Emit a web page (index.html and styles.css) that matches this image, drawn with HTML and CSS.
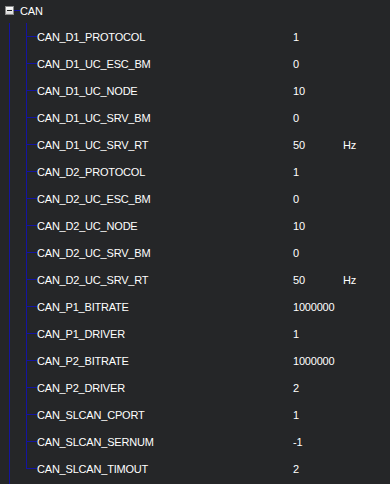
FILE: index.html
```html
<!DOCTYPE html>
<html lang="en">
<head>
    <meta charset="UTF-8">
    <title>Parameters</title>
    <link rel="stylesheet" href="styles.css">
</head>
<body>
    <div class="tree">
        <!-- 그룹 헤더 -->
        <div class="group-row">
            <span class="toggle"><span class="minus"></span></span>
            <span class="group-link"></span>
            <span class="group-name">CAN</span>
        </div>

        <div class="group-body">
            <div class="row"><span class="branch"></span><span class="name">CAN_D1_PROTOCOL</span><span class="value">1</span><span class="unit"></span></div>
            <div class="row"><span class="branch"></span><span class="name">CAN_D1_UC_ESC_BM</span><span class="value">0</span><span class="unit"></span></div>
            <div class="row"><span class="branch"></span><span class="name">CAN_D1_UC_NODE</span><span class="value">10</span><span class="unit"></span></div>
            <div class="row"><span class="branch"></span><span class="name">CAN_D1_UC_SRV_BM</span><span class="value">0</span><span class="unit"></span></div>
            <div class="row"><span class="branch"></span><span class="name">CAN_D1_UC_SRV_RT</span><span class="value">50</span><span class="unit">Hz</span></div>
            <div class="row"><span class="branch"></span><span class="name">CAN_D2_PROTOCOL</span><span class="value">1</span><span class="unit"></span></div>
            <div class="row"><span class="branch"></span><span class="name">CAN_D2_UC_ESC_BM</span><span class="value">0</span><span class="unit"></span></div>
            <div class="row"><span class="branch"></span><span class="name">CAN_D2_UC_NODE</span><span class="value">10</span><span class="unit"></span></div>
            <div class="row"><span class="branch"></span><span class="name">CAN_D2_UC_SRV_BM</span><span class="value">0</span><span class="unit"></span></div>
            <div class="row"><span class="branch"></span><span class="name">CAN_D2_UC_SRV_RT</span><span class="value">50</span><span class="unit">Hz</span></div>
            <div class="row"><span class="branch"></span><span class="name">CAN_P1_BITRATE</span><span class="value">1000000</span><span class="unit"></span></div>
            <div class="row"><span class="branch"></span><span class="name">CAN_P1_DRIVER</span><span class="value">1</span><span class="unit"></span></div>
            <div class="row"><span class="branch"></span><span class="name">CAN_P2_BITRATE</span><span class="value">1000000</span><span class="unit"></span></div>
            <div class="row"><span class="branch"></span><span class="name">CAN_P2_DRIVER</span><span class="value">2</span><span class="unit"></span></div>
            <div class="row"><span class="branch"></span><span class="name">CAN_SLCAN_CPORT</span><span class="value">1</span><span class="unit"></span></div>
            <div class="row"><span class="branch"></span><span class="name">CAN_SLCAN_SERNUM</span><span class="value">-1</span><span class="unit"></span></div>
            <div class="row last"><span class="branch"></span><span class="name">CAN_SLCAN_TIMOUT</span><span class="value">2</span><span class="unit"></span></div>
        </div>
    </div>
</body>
</html>
```

FILE: styles.css
```css
/* 기본 리셋 */
* {
    margin: 0;
    padding: 0;
    box-sizing: border-box;
}

body {
    background-color: #252628;
    color: #ffffff;
    font-family: 'Liberation Sans', Arial, sans-serif;
    font-size: 11px;
    letter-spacing: -0.2px;
    height: 484px;
    overflow: hidden;
}

.tree {
    height: 100%;
}

/* 그룹 헤더 */
.group-row {
    display: flex;
    align-items: center;
    height: 23px;
    padding-left: 5px;
    padding-bottom: 2px;
}

.toggle {
    width: 9px;
    height: 9px;
    border: 1px solid #8a8a8a;
    background: linear-gradient(#ffffff, #d8d8d8);
    display: flex;
    align-items: center;
    justify-content: center;
}

.minus {
    width: 5px;
    height: 1px;
    background-color: #202020;
}

.group-link {
    width: 6px;
    height: 1px;
    background-color: #1414a0;
}

.group-name {
    padding-left: 0;
}

/* 하위 항목 */
.group-body {
    margin-left: 9px;
    border-left: 1px solid #1414a0;
    padding-left: 16px;
    height: 100%;
}

.row {
    display: flex;
    align-items: center;
    height: 27px;
}

.branch {
    width: 11px;
    height: 100%;
    align-self: stretch;
    background:
        linear-gradient(#1414a0, #1414a0) left top / 1px 100% no-repeat,
        linear-gradient(#1414a0, #1414a0) left 13px / 100% 1px no-repeat;
}

.row.last .branch {
    background:
        linear-gradient(#1414a0, #1414a0) left top / 1px 14px no-repeat,
        linear-gradient(#1414a0, #1414a0) left 13px / 100% 1px no-repeat;
}

.name {
    width: 256px;
}

.value {
    width: 50px;
}
```
